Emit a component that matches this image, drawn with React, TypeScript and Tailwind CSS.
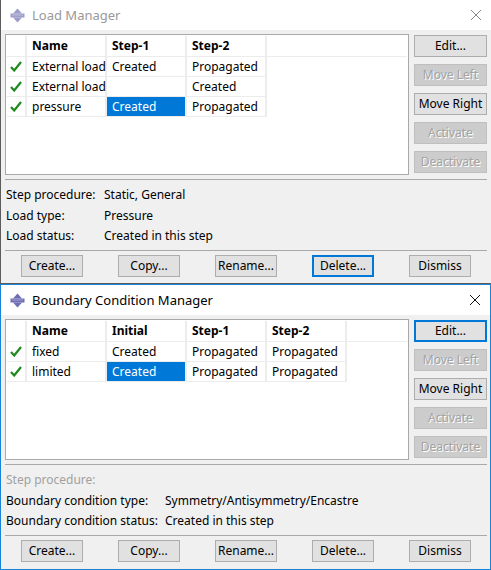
import React from "react"

type Row = { name: string; cells: string[] }

type ManagerProps = {
  title: string
  active: boolean
  columns: string[]
  rows: Row[]
  selected: [number, number]
  info: { label: string; value: string; dim?: boolean }[]
  labelWidth: string
  focusEdit?: boolean
  focusDelete?: boolean
  className: string
}

function ManagerIcon({ faded }: { faded: boolean }) {
  const fill = faded ? "#9d9dcc" : "#6e6eb4"
  return (
    <svg width="15" height="15" viewBox="0 0 15 15">
      <path d="M7.5 0.5 L12 5.5 H3 Z" fill={fill} />
      <path d="M7.5 14.5 L12 9.5 H3 Z" fill={fill} />
      <rect x="0.5" y="5.5" width="14" height="4" fill={fill} />
      <rect x="2" y="6.5" width="11" height="1" fill="#ffffff" opacity="0.35" />
    </svg>
  )
}

function CloseIcon({ faded }: { faded: boolean }) {
  return (
    <svg width="12" height="12" viewBox="0 0 12 12">
      <path d="M1 1 L11 11 M11 1 L1 11" stroke={faded ? "#8a8a8a" : "#111111"} strokeWidth="1" />
    </svg>
  )
}

function Check() {
  return (
    <svg width="12" height="11" viewBox="0 0 12 11">
      <path d="M1 6 L4.2 9.5 L11 1" fill="none" stroke="#1f8a1f" strokeWidth="2.2" strokeLinejoin="miter" />
    </svg>
  )
}

function SideButton({ label, disabled, focus }: { label: string; disabled?: boolean; focus?: boolean }) {
  return (
    <div
      className={
        "h-[22px] w-[73px] flex items-center justify-center whitespace-nowrap " +
        (disabled
          ? "bg-[#cccccc] border border-[#bfbfbf] text-[#a3a3a3] [text-shadow:1px_1px_0_#ffffff]"
          : focus
            ? "bg-[#e1e1e1] border-2 border-[#0078d7] text-black"
            : "bg-[#e1e1e1] border border-[#adadad] text-black")
      }
    >
      {label}
    </div>
  )
}

function BottomButton({ label, focus }: { label: string; focus?: boolean }) {
  return (
    <div
      className={
        "h-[22px] w-[62px] flex items-center justify-center bg-[#e1e1e1] text-black whitespace-nowrap " +
        (focus ? "border-2 border-[#0078d7]" : "border border-[#adadad]")
      }
    >
      {label}
    </div>
  )
}

function Manager(p: ManagerProps) {
  const widths = ["w-[20px]", ...p.columns.map(() => "w-[80px]")]
  return (
    <div className={"flex flex-col bg-[#f0f0f0] " + p.className}>
      {/* title bar */}
      <div className="h-[30px] bg-white flex items-center pl-[9px] pr-[8px] shrink-0">
        <ManagerIcon faded={!p.active} />
        <span className={"ml-[7px] text-[13px] " + (p.active ? "text-black" : "text-[#999999]")}>{p.title}</span>
        <div className="ml-auto mr-[1px] flex items-center">
          <CloseIcon faded={!p.active} />
        </div>
      </div>

      <div className="flex pl-[4px] pt-[4px]">
        {/* table */}
        <div className="w-[404px] h-[141px] bg-white border border-[#a9a9a9] p-[1px]">
          <div className="flex h-[21px] border-b border-[#ececec]">
            {["", ...p.columns].map((c, i) => (
              <div
                key={i}
                className={widths[i] + " border-r-2 border-[#ececec] pl-[5px] font-bold flex items-center"}
              >
                {c}
              </div>
            ))}
          </div>
          {p.rows.map((r, ri) => (
            <div key={ri} className="flex h-[20px]">
              <div className="w-[20px] flex items-center justify-center border-r-2 border-[#ececec] border-b border-b-[#ececec]">
                <Check />
              </div>
              {[r.name, ...r.cells].map((c, ci) => {
                const sel = p.selected[0] === ri && p.selected[1] === ci
                return (
                  <div
                    key={ci}
                    className={
                      "w-[80px] pl-[5px] pt-[1px] flex items-center whitespace-nowrap border-r-2 border-[#ececec] border-b border-b-[#ececec] " +
                      (sel ? "bg-[#0078d7] text-white" : "")
                    }
                  >
                    {c}
                  </div>
                )
              })}
            </div>
          ))}
        </div>

        {/* side buttons */}
        <div className="ml-[5px] flex flex-col gap-[7px] pt-[1px]">
          <SideButton label="Edit..." focus={p.focusEdit} />
          <SideButton label="Move Left" disabled />
          <SideButton label="Move Right" />
          <SideButton label="Activate" disabled />
          <SideButton label="Deactivate" disabled />
        </div>
      </div>

      <div className="mx-[4px] mt-[4px] h-[1px] bg-[#a9a9a9] w-[482px]" />

      <div className="pl-[5px] pt-[5px] flex flex-col">
        {p.info.map((row, i) => (
          <div
            key={i}
            className={"h-[20.5px] flex items-center whitespace-nowrap " + (row.dim ? "text-[#a0a0a0]" : "text-black")}
          >
            <span className={p.labelWidth + " shrink-0"}>{row.label}</span>
            <span>{row.value}</span>
          </div>
        ))}
      </div>

      <div className="mx-[4px] mt-[3px] h-[1px] bg-[#a9a9a9] w-[482px]" />

      <div className="flex pl-[20px] pt-[4px] gap-[35px]">
        <BottomButton label="Create..." />
        <BottomButton label="Copy..." />
        <BottomButton label="Rename..." />
        <BottomButton label="Delete..." focus={p.focusDelete} />
        <BottomButton label="Dismiss" />
      </div>
    </div>
  )
}

export default function App() {
  return (
    <div className="w-[491px] h-[570px] overflow-hidden bg-[#f0f0f0] text-[12px] text-black font-['Noto_Sans',sans-serif] leading-none">
      <Manager
        className="h-[284px] border-l border-b border-[#5c5c5c]"
        title="Load Manager"
        active={false}
        columns={["Name", "Step-1", "Step-2"]}
        rows={[
          { name: "External load", cells: ["Created", "Propagated"] },
          { name: "External load", cells: ["", "Created"] },
          { name: "pressure", cells: ["Created", "Propagated"] },
        ]}
        selected={[2, 1]}
        labelWidth="w-[98px]"
        info={[
          { label: "Step procedure:", value: "Static, General" },
          { label: "Load type:", value: "Pressure" },
          { label: "Load status:", value: "Created in this step" },
        ]}
        focusDelete
      />
      <Manager
        className="h-[286px] border border-[#1883d7]"
        title="Boundary Condition Manager"
        active
        columns={["Name", "Initial", "Step-1", "Step-2"]}
        rows={[
          { name: "fixed", cells: ["Created", "Propagated", "Propagated"] },
          { name: "limited", cells: ["Created", "Propagated", "Propagated"] },
        ]}
        selected={[1, 1]}
        labelWidth="w-[159px]"
        info={[
          { label: "Step procedure:", value: "", dim: true },
          { label: "Boundary condition type:", value: "Symmetry/Antisymmetry/Encastre" },
          { label: "Boundary condition status:", value: "Created in this step" },
        ]}
        focusEdit
      />
    </div>
  )
}
